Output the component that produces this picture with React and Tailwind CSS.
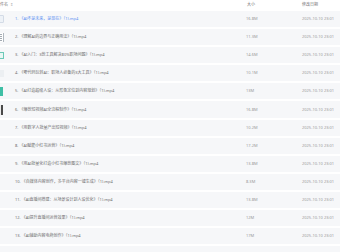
import React from "react";

const rows = [
  ["1. 《AI不是未来，是现在》（1).mp4", "16.8M", "thumbA"],
  ["2. 《理解AI的边界与正确用法》（1).mp4", "11.3M", "doc"],
  ["3. 《AI入门：3款工具解决80%职场问题》（1).mp4", "14.6M", "teal"],
  ["4. 《零代码玩转AI：职场人必备的3大工具》（1).mp4", "10.1M", "faint"],
  ["5. 《AI打造超级人设：从形象定位到内容规划》（1).mp4", "13M", "tealSolid"],
  ["6. 《爆款短视频AI全流程制作》（1).mp4", "16.8M", "dark"],
  ["7. 《用数字人批量产出短视频》（1).mp4", "10.2M", "none"],
  ["8. 《AI赋能小红书运营》（1).mp4", "17.2M", "none"],
  ["9. 《用AI批量化打造小红书爆款图文》（1).mp4", "13.8M", "none"],
  ["10. 《自媒体内容创作，多平台内容一键生成》（1).mp4", "8.3M", "none"],
  ["11. 《AI直播间搭建：从场景设计到人设优化》（1).mp4", "13.8M", "none"],
  ["12. 《AI提升直播间运营效果》（1).mp4", "12M", "none"],
  ["13. 《AI辅助内容电商创作》（1).mp4", "17M", "none"],
  ["", "", "none"],
];

function Thumb({ kind }) {
  if (kind === "thumbA")
    return <div className="ml-[-4px] h-[8px] w-[8px] rounded-[1px] border border-[#d3dbe6] bg-[#eef2f7]" />;
  if (kind === "doc")
    return (
      <div className="ml-[-4px] flex h-[9px] w-[8px] flex-col justify-center gap-[1px] border-r border-[#b0b7bf] bg-white pr-[1px]">
        <div className="h-[1px] bg-[#a3aab2]" />
        <div className="h-[1px] bg-[#a3aab2]" />
        <div className="h-[1px] bg-[#a3aab2]" />
        <div className="h-[1px] bg-[#a3aab2]" />
      </div>
    );
  if (kind === "teal")
    return <div className="ml-[-4px] h-[7px] w-[8px] border border-[#6cc9b8] bg-[#e9f7f4]" />;
  if (kind === "faint")
    return <div className="ml-[-4px] h-[7px] w-[8px] bg-[#eceff2]" />;
  if (kind === "tealSolid")
    return <div className="ml-[-4px] h-[9px] w-[7px] bg-[#3fbfa5]" />;
  if (kind === "dark")
    return (
      <div className="ml-[-4px] flex h-[10px] w-[7px] items-stretch justify-end bg-[#ececec]">
        <div className="w-[2px] bg-[#4a4a4a]" />
      </div>
    );
  return null;
}

export default function App() {
  return (
    <div
      className="h-[252px] w-[340px] overflow-hidden bg-white text-[4px] leading-none"
      style={{ fontFamily: '"Noto Sans", "Noto Sans CJK SC", sans-serif' }}
    >
      <div className="grid h-[10px] grid-cols-[246px_56px_1fr] items-center text-[#777]">
        <div className="flex items-center gap-[2px]">
          <span>件名</span>
          <span className="text-[4px] text-[#aaa]">⇕</span>
        </div>
        <div className="pl-[1px]">大小</div>
        <div>修改日期</div>
      </div>
      <div className="flex flex-col gap-[2px] pt-[1px]">
        {rows.map(([name, size, kind], i) => (
          <div
            key={i}
            className="grid h-[16.1px] grid-cols-[15px_231px_56px_1fr] items-center bg-[#f6f7f9]"
          >
            <div className="flex items-center">
              <Thumb kind={kind} />
            </div>
            <div className={i === 0 ? "text-[#5b8ff2]" : "text-[#6e6e6e]"}>{name}</div>
            <div className="text-[#9a9a9a]">{size}</div>
            <div className="text-[#9a9a9a]">{name ? "2025-10-10 23:01" : ""}</div>
          </div>
        ))}
      </div>
    </div>
  );
}
